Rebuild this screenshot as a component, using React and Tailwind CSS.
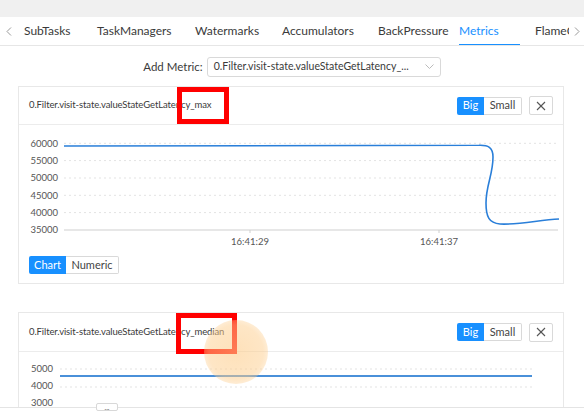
import React from "react";

function Chevron({ dir = "left" }) {
  return (
    <svg width="6" height="9" viewBox="0 0 6 9">
      {dir === "left" ? (
        <polyline points="5,0.5 1,4.5 5,8.5" fill="none" stroke="#999" strokeWidth="1" />
      ) : (
        <polyline points="1,0.5 5,4.5 1,8.5" fill="none" stroke="#999" strokeWidth="1" />
      )}
    </svg>
  );
}

function XIcon() {
  return (
    <svg width="10" height="10" viewBox="0 0 10 10">
      <line x1="1" y1="1" x2="9" y2="9" stroke="#555" strokeWidth="1.1" />
      <line x1="9" y1="1" x2="1" y2="9" stroke="#555" strokeWidth="1.1" />
    </svg>
  );
}

function CardHeader({ title, h }) {
  return (
    <div className={`${h} flex items-center justify-between pl-[10px] pr-[10px] border-b border-[#ececec]`}>
      <span className="text-[9.5px] text-[#3a3a3a] tracking-[-0.1px]">{title}</span>
      <div className="flex items-center">
        <div className="flex h-[18px] text-[11px]">
          <div className="w-[27px] flex items-center justify-center bg-[#1890ff] text-white rounded-l-[2px]">Big</div>
          <div className="w-[38px] flex items-center justify-center border border-[#d9d9d9] border-l-0 text-[#444] rounded-r-[2px]">Small</div>
        </div>
        <div className="ml-[7px] w-[24px] h-[19px] flex items-center justify-center border border-[#d9d9d9] rounded-[2px]">
          <XIcon />
        </div>
      </div>
    </div>
  );
}

export default function App() {
  const grid1 = [18.3, 35.6, 53, 70.3, 87.6];
  const labels1 = ["60000", "55000", "50000", "45000", "40000", "35000"];
  const tabs = [
    { t: "SubTasks", w: "w-[73px]" },
    { t: "TaskManagers", w: "w-[98px]" },
    { t: "Watermarks", w: "w-[87px]" },
    { t: "Accumulators", w: "w-[96px]" },
    { t: "BackPressure", w: "w-[81px]" },
  ];
  return (
    <div className="w-[584px] h-[413px] overflow-hidden bg-white relative font-['Lato','Noto_Sans',sans-serif] text-[#333]">
      <div className="h-[17px] bg-[#f0f0f0]" />
      <div className="h-[29px] flex items-stretch border-b border-[#e6e6e6] text-[12px] text-[#3a3a3a]">
        <div className="w-[24px] flex items-center pl-[6px]">
          <Chevron dir="left" />
        </div>
        <div className="w-[545px] flex items-stretch overflow-hidden whitespace-nowrap">
          {tabs.map((x) => (
            <div key={x.t} className={`${x.w} shrink-0 flex items-center`}>{x.t}</div>
          ))}
          <div className="w-[76px] shrink-0 flex items-center relative text-[#1890ff]">
            Metrics
            <span className="absolute left-0 bottom-[-1px] w-[61px] h-[2px] bg-[#1890ff]" />
          </div>
          <div className="w-[34px] shrink-0 flex items-center overflow-hidden">FlameGraph</div>
        </div>
        <div className="flex-1 flex items-center justify-center">
          <Chevron dir="right" />
        </div>
      </div>

      <div className="mt-[11px] flex items-center justify-center gap-[4px] h-[20px]">
        <span className="text-[11.5px] text-[#3a3a3a]">Add Metric:</span>
        <div className="w-[234px] h-[20px] border border-[#d9d9d9] rounded-[3px] flex items-center justify-between pl-[6px] pr-[6px]">
          <span className="text-[10.5px] text-[#3a3a3a]">0.Filter.visit-state.valueStateGetLatency_...</span>
          <svg width="9" height="6" viewBox="0 0 9 6">
            <polyline points="0.5,0.5 4.5,4.5 8.5,0.5" fill="none" stroke="#bbb" strokeWidth="1" />
          </svg>
        </div>
      </div>

      <div className="mt-[9px] ml-[18px] w-[546px] border border-[#e8e8e8]">
        <CardHeader title="0.Filter.visit-state.valueStateGetLatency_max" h="h-[38px]" />
        <svg width="544" height="125" className="block">
          {grid1.map((y) => (
            <line key={y} x1="45" x2="539" y1={y} y2={y} stroke="#e3e3e3" strokeDasharray="2,3" />
          ))}
          <line x1="45" x2="539" y1="105" y2="105" stroke="#cfcfcf" />
          {labels1.map((l, i) => (
            <text key={l} x="39" y={18.3 + i * 17.34 + 3.3} textAnchor="end" fontSize="9.5" fill="#555">{l}</text>
          ))}
          <line x1="231" x2="231" y1="105" y2="108" stroke="#cfcfcf" />
          <line x1="420" x2="420" y1="105" y2="108" stroke="#cfcfcf" />
          <text x="231" y="119.5" textAnchor="middle" fontSize="9.5" fill="#555">16:41:29</text>
          <text x="420" y="119.5" textAnchor="middle" fontSize="9.5" fill="#555">16:41:37</text>
          <path d="M45,21 L460,20.3 C469,20 474,22 474,32 C474,50 467,60 467,78 C467,92 470,98 481,99 C500,100 520,95 540,94" fill="none" stroke="#2a7fd9" strokeWidth="1.6" />
        </svg>
        <div className="mt-[6px] mb-[9px] ml-[10px] flex h-[18px] text-[11px]">
          <div className="w-[37px] flex items-center justify-center bg-[#1890ff] text-white rounded-l-[2px]">Chart</div>
          <div className="w-[53px] flex items-center justify-center border border-[#d9d9d9] border-l-0 text-[#444] rounded-r-[2px]">Numeric</div>
        </div>
      </div>

      <div className="mt-[28px] ml-[18px] w-[546px] border border-[#e8e8e8]">
        <CardHeader title="0.Filter.visit-state.valueStateGetLatency_median" h="h-[39px]" />
        <svg width="544" height="80" className="block">
          <line x1="41" x2="513" y1="17" y2="17" stroke="#e3e3e3" strokeDasharray="2,3" />
          <line x1="41" x2="513" y1="35" y2="35" stroke="#e3e3e3" strokeDasharray="2,3" />
          <text x="34" y="20.3" textAnchor="end" fontSize="9.5" fill="#555">5000</text>
          <text x="34" y="37.3" textAnchor="end" fontSize="9.5" fill="#555">4000</text>
          <text x="34" y="54.3" textAnchor="end" fontSize="9.5" fill="#555">3000</text>
          <line x1="41" x2="513" y1="24" y2="24" stroke="#4a90d9" strokeWidth="1.8" />
        </svg>
      </div>

      <div className="absolute left-[177px] top-[87px] w-[52px] h-[37px] border-[5px] border-[#f00]" />
      <div className="absolute left-[176px] top-[313px] w-[61px] h-[41px] border-[5px] border-[#f00]" />
      <div className="absolute left-[204px] top-[320px] w-[64px] h-[64px] rounded-full bg-[radial-gradient(circle,rgba(253,205,140,0.6)_0%,rgba(253,205,140,0.5)_60%,rgba(253,205,140,0)_100%)]" />

      <div className="absolute left-0 top-[407px] w-[584px] h-[6px] bg-white border-t border-[#e4e4e4]" />
      <div className="absolute left-[96px] top-[403px] w-[22px] h-[8px] bg-white border border-[#d8d8d8] rounded-[2px] flex items-center justify-center text-[7px] leading-none text-[#555]">...</div>
    </div>
  );
}
